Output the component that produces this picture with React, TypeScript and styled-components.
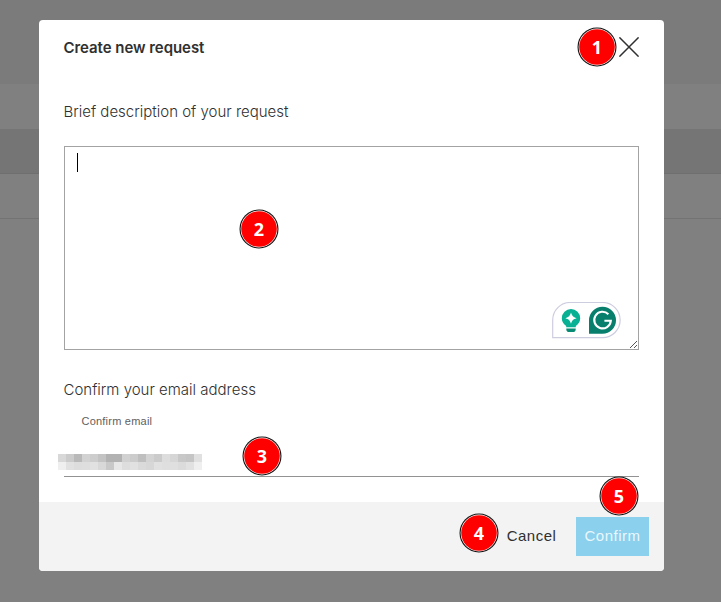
import React from "react";
import styled, { createGlobalStyle } from "styled-components";

const GlobalStyle = createGlobalStyle`
  *, *::before, *::after { box-sizing: border-box; }
  body { margin: 0; background: #808080; font-family: Inter, "Liberation Sans", sans-serif; }
`;

const Page = styled.main`
  position: relative;
  height: 602px;
  overflow: hidden;
  background: #808080;
`;

const Backdrop = styled.div`
  display: flex;
  flex-direction: column;
`;

const Band = styled.div<{ $height: number; $color: string; $line?: string }>`
  height: ${(p) => p.$height}px;
  background: ${(p) => p.$color};
  border-bottom: ${(p) => (p.$line ? `1px solid ${p.$line}` : "none")};
`;

const Overlay = styled.div`
  position: absolute;
  inset: 0;
  padding: 20px 57px 31px 39px;
`;

const Dialog = styled.section`
  display: flex;
  flex-direction: column;
  height: 551px;
  border-radius: 4px;
  overflow: hidden;
  background: #fff;
`;

const Header = styled.header`
  display: flex;
  align-items: center;
  justify-content: space-between;
  height: 55px;
  padding: 0 25px 0 24.5px;
`;

const Title = styled.h1`
  margin: 0;
  font-size: 15px;
  line-height: 20px;
  font-weight: 600;
  letter-spacing: -0.05px;
  color: #303030;
`;

const CloseButton = styled.button`
  display: flex;
  margin-bottom: 1px;
  padding: 0;
  border: 0;
  background: none;
`;

const Body = styled.div`
  display: flex;
  flex-direction: column;
  flex: 1;
  padding: 27px 25px 0;
`;

const Label = styled.label`
  margin-left: -0.5px;
  font-size: 15px;
  line-height: 20px;
  font-weight: 300;
  letter-spacing: 0;
  color: #303030;
`;

const TextArea = styled.div`
  display: flex;
  flex-direction: column;
  justify-content: space-between;
  position: relative;
  height: 204px;
  margin: 24px 0 30px;
  padding: 6px 17px 10px 12px;
  border: 1px solid #a3a3a3;
`;

const Caret = styled.span`
  width: 1px;
  height: 19px;
  background: #000;
`;

const Assistant = styled.div`
  align-self: flex-end;
  display: flex;
  height: 37px;
`;

const ResizeGrip = styled.svg`
  position: absolute;
  right: 0;
  bottom: 0;
`;

const FieldLabel = styled.label`
  margin: 13px 0 0 17.5px;
  font: 11px/16px "Liberation Sans", Arial, sans-serif;
  letter-spacing: 0.22px;
  color: #606060;
`;

const EmailField = styled.div`
  height: 48px;
  padding-top: 25px;
  border-bottom: 1px solid #929292;
`;

const Mosaic = styled.div`
  display: grid;
  grid-template-columns: repeat(18, 8px);
  grid-auto-rows: 8px;
  margin-left: -6px;
`;

const Tile = styled.span<{ $shade: string }>`
  background: #${(p) => p.$shade}${(p) => p.$shade}${(p) => p.$shade};
`;

const Footer = styled.footer`
  display: flex;
  justify-content: flex-end;
  align-items: flex-start;
  height: 69px;
  padding: 15px 15px 0;
  background: #f3f3f3;
`;

const Button = styled.button<{ $primary?: boolean }>`
  width: ${(p) => (p.$primary ? 73 : 89)}px;
  height: 39px;
  padding: 0 0 2px;
  border: 0;
  background: ${(p) => (p.$primary ? "#8bd0ec" : "transparent")};
  color: ${(p) => (p.$primary ? "#e9f7fd" : "#303030")};
  font: 15px/20px "Liberation Sans", Arial, sans-serif;
  letter-spacing: 0.5px;
`;

const Marker = styled.span<{ $x: number; $y: number }>`
  position: absolute;
  left: ${(p) => p.$x - 20}px;
  top: ${(p) => p.$y - 20}px;
  display: flex;
  align-items: center;
  justify-content: center;
  width: 40px;
  height: 40px;
  font: 700 18px/20px "Open Sans", sans-serif;
  color: #fff;

  svg { position: absolute; inset: 0; }
  span { position: relative; }
`;

const bands = [
  { height: 84, color: "#7b7b7b" },
  { height: 45, color: "#808080" },
  { height: 45, color: "#757575", line: "#6f6f6f" },
  { height: 45, color: "#808080", line: "#737373" },
];

const shades = (
  "d8 cb b9 d2 cd c3 b2 b2 d1 cc bf d3 cb dd d6 c8 c5 e0 " +
  "ef e1 dd de e1 d8 c8 e7 dd e1 da d7 e1 df df db e1 ef"
).split(" ");

const markers = [
  { x: 597, y: 47 },
  { x: 259, y: 229 },
  { x: 262, y: 456 },
  { x: 479, y: 533 },
  { x: 619, y: 496 },
];

const CloseIcon = () => (
  <svg width="20" height="20" viewBox="0 0 20 20" fill="none" stroke="#303030" strokeWidth="1.5">
    <path d="M.4.4l19.2 19.2M19.6.4L.4 19.6" />
  </svg>
);

const MarkerDisc = () => (
  <svg width="40" height="40" viewBox="0 0 40 40">
    <circle cx="20" cy="20" r="19.5" fill="#111" />
    <circle cx="20" cy="20" r="18.4" fill="#fff" />
    <circle cx="20" cy="20" r="17.8" fill="#f00" />
  </svg>
);

const AssistantIcon = () => (
  <svg width="69" height="37" viewBox="0 0 69 37" fill="none">
    <path d="M.7 35.6V18A17.5 17.5 0 0 1 18.2.5H50.6A17.55 17.55 0 0 1 50.6 35.6Z" fill="#fff" stroke="#cdcde0" strokeWidth="1.2" />
    <path d="M19 7.1a9.2 9.2 0 0 0-9.2 9.2c0 3.5 1.9 6 4.4 7.7v1.2h9.6V24c2.5-1.7 4.4-4.2 4.4-7.7A9.2 9.2 0 0 0 19 7.1Z" fill="#08b094" />
    <path d="M14.3 26.5h9.4v.8a2.8 2.8 0 0 1-2.8 2.8h-3.8a2.8 2.8 0 0 1-2.8-2.8Z" fill="#078b74" />
    <path d="M19 10.6c1.2 3.6 2.1 4.5 5.6 5.6-3.5 1.1-4.4 2-5.6 5.6-1.2-3.6-2.1-4.5-5.6-5.6 3.5-1.1 4.4-2 5.6-5.6Z" fill="#fff" />
    <path d="M37 31.7V18.2A13.5 13.5 0 1 1 50.5 31.7Z" fill="#087e6d" />
    <path d="M56.4 12.2A8.3 8.3 0 1 0 58.8 18.8H52.4" stroke="#fff" strokeWidth="2.1" />
  </svg>
);

export default function App() {
  return (
    <Page>
      <GlobalStyle />
      <Backdrop>
        {bands.map((band, i) => (
          <Band key={i} $height={band.height} $color={band.color} $line={band.line} />
        ))}
      </Backdrop>
      <Overlay>
        <Dialog role="dialog" aria-labelledby="dialog-title">
          <Header>
            <Title id="dialog-title">Create new request</Title>
            <CloseButton aria-label="Close"><CloseIcon /></CloseButton>
          </Header>
          <Body>
            <Label>Brief description of your request</Label>
            <TextArea role="textbox">
              <Caret />
              <Assistant><AssistantIcon /></Assistant>
              <ResizeGrip width="9" height="9" viewBox="0 0 9 9" stroke="#555" fill="none">
                <path d="M1 8L8 1M5 8l3-3" />
              </ResizeGrip>
            </TextArea>
            <Label>Confirm your email address</Label>
            <FieldLabel>Confirm email</FieldLabel>
            <EmailField>
              <Mosaic>
                {shades.map((shade, i) => <Tile key={i} $shade={shade} />)}
              </Mosaic>
            </EmailField>
          </Body>
          <Footer>
            <Button>Cancel</Button>
            <Button $primary>Confirm</Button>
          </Footer>
        </Dialog>
      </Overlay>
      {markers.map((marker, i) => (
        <Marker key={i} $x={marker.x} $y={marker.y}>
          <MarkerDisc />
          <span>{i + 1}</span>
        </Marker>
      ))}
    </Page>
  );
}
